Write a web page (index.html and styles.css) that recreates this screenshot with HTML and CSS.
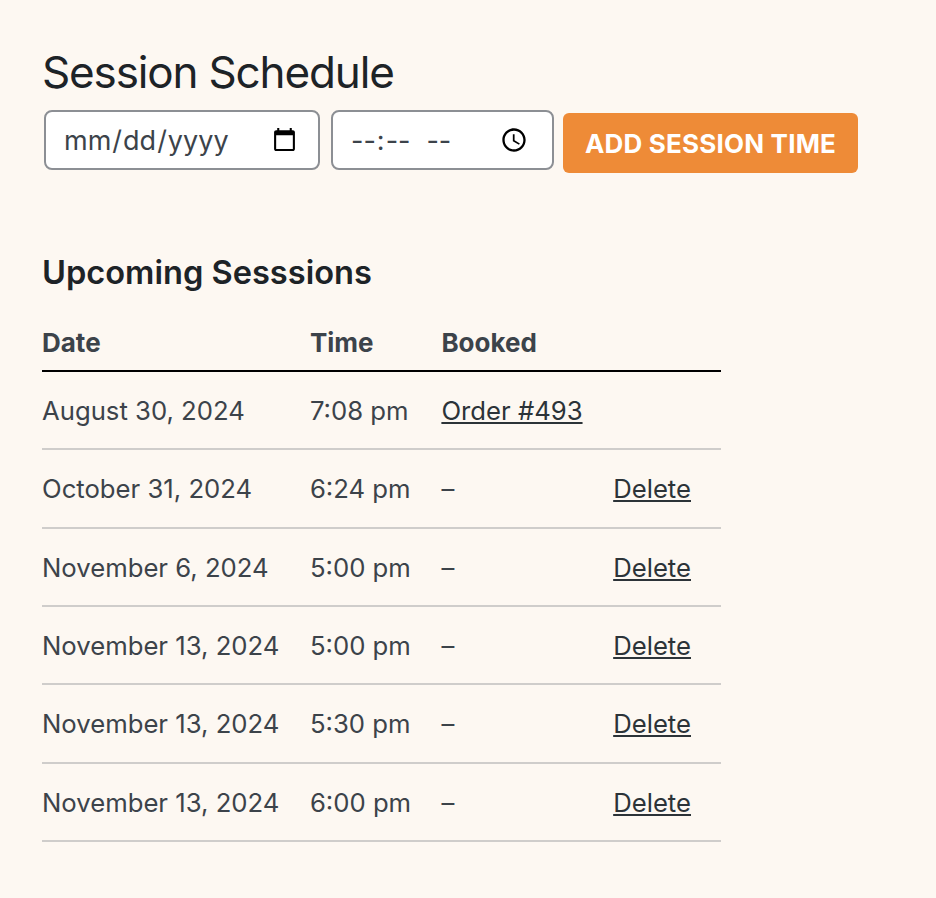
FILE: index.html
```html
<!DOCTYPE html>
<html lang="en">
<head>
    <meta charset="UTF-8">
    <meta name="viewport" content="width=device-width, initial-scale=1.0">
    <title>Session Schedule</title>
    <link rel="stylesheet" href="styles.css">
</head>
<body>

<div class="container">
    <h2 class="page-title">Session Schedule</h2>
    <form class="session-form">
        <input type="date" class="date-input">
        <input type="time" class="time-input">
        <button type="button" class="add-button">Add session time</button>
    </form>

    <h3 class="section-title">Upcoming Sesssions</h3>
    <table class="sessions">
        <thead>
            <tr>
                <th>Date</th>
                <th>Time</th>
                <th>Booked</th>
                <th></th>
            </tr>
        </thead>
        <tbody>
            <tr>
                <td>August 30, 2024</td>
                <td>7:08 pm</td>
                <td><a href="#">Order #493</a></td>
                <td></td>
            </tr>
            <tr>
                <td>October 31, 2024</td>
                <td>6:24 pm</td>
                <td>–</td>
                <td><a href="#">Delete</a></td>
            </tr>
            <tr>
                <td>November 6, 2024</td>
                <td>5:00 pm</td>
                <td>–</td>
                <td><a href="#">Delete</a></td>
            </tr>
            <tr>
                <td>November 13, 2024</td>
                <td>5:00 pm</td>
                <td>–</td>
                <td><a href="#">Delete</a></td>
            </tr>
            <tr>
                <td>November 13, 2024</td>
                <td>5:30 pm</td>
                <td>–</td>
                <td><a href="#">Delete</a></td>
            </tr>
            <tr>
                <td>November 13, 2024</td>
                <td>6:00 pm</td>
                <td>–</td>
                <td><a href="#">Delete</a></td>
            </tr>
        </tbody>
    </table>
</div>

</body>
</html>
```

FILE: styles.css
```css
body {
    font-family: Inter, "Liberation Sans", sans-serif;
    background-color: #fdf8f2;
    color: #3c434a;
    margin: 0;
    padding: 0;
}
.container {
    padding: 46px 42px 56px;
}
.page-title {
    font-size: 44px;
    font-weight: 400;
    line-height: 52px;
    letter-spacing: -1.15px;
    color: #1d2327;
    margin: 0 0 12px;
}
.session-form {
    display: flex;
    align-items: flex-start;
    margin-bottom: 80px;
}
.date-input, .time-input {
    box-sizing: border-box;
    height: 60px;
    padding: 0 18px;
    font-family: inherit;
    font-size: 27px;
    color: #3c434a;
    background-color: #fff;
    border: 2px solid #8c8f94;
    border-radius: 8px;
}
.date-input {
    width: 276px;
    margin-left: 2px;
    margin-right: 11px;
    padding-left: 17px;
}
.time-input {
    width: 223px;
    margin-right: 9px;
    padding-left: 17px;
    padding-right: 21px;
}
.time-input::-webkit-datetime-edit-hour-field,
.time-input::-webkit-datetime-edit-minute-field {
    letter-spacing: 0.8px;
}
.time-input::-webkit-datetime-edit-ampm-field {
    margin-left: 9px;
}
.add-button {
    height: 60px;
    width: 295px;
    margin-top: 3px;
    padding: 0;
    font-family: inherit;
    font-size: 26px;
    font-weight: 700;
    letter-spacing: 0.2px;
    text-transform: uppercase;
    color: #fff;
    background-color: #ee8b37;
    border: none;
    border-radius: 6px;
}
.section-title {
    font-size: 32.6px;
    font-weight: 600;
    line-height: 38px;
    color: #1d2327;
    margin: 0 0 25px;
}
.sessions {
    width: 679px;
    border-collapse: collapse;
    font-size: 25.7px;
}
.sessions th, .sessions td {
    padding: 0 30px 0 0;
    text-align: left;
    white-space: nowrap;
}
.sessions th {
    height: 52px;
    padding-bottom: 2px;
    font-size: 26px;
    font-weight: 700;
    border-bottom: 2px solid #000;
}
.sessions td {
    height: 75.73px;
    padding-top: 0.6px;
    border-bottom: 2px solid #cfcdcb;
}
.sessions td:nth-child(4) {
    text-align: right;
}
.sessions a {
    color: #2c3338;
}
```
